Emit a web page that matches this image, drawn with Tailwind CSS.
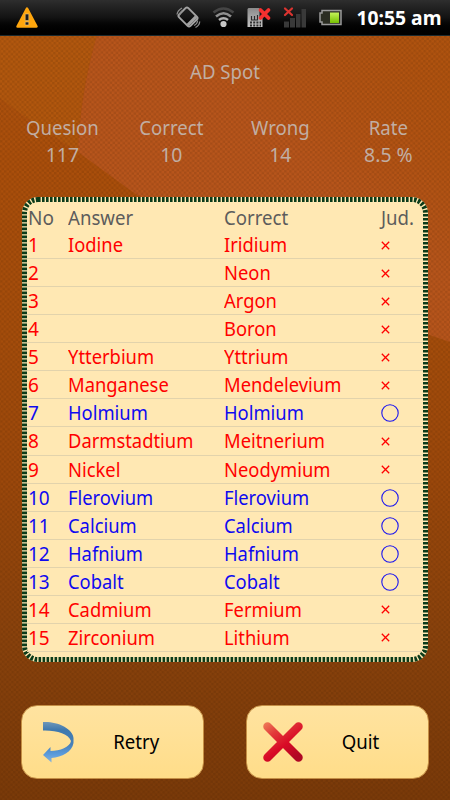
<!DOCTYPE html>
<html lang="en">
<head>
  <meta charset="UTF-8">
  <title>AD Spot</title>
  <script src="https://cdn.jsdelivr.net/npm/@tailwindcss/browser@4"></script>
</head>
<body class="w-[450px] h-[800px] overflow-hidden bg-[#874009] font-['Noto_Sans',sans-serif] text-[20px]">

  <div class="relative isolate flex flex-col w-[450px] h-[800px]">

    <!-- Background -->
    <svg class="absolute inset-0 -z-10" width="450" height="800" viewBox="0 0 450 800">
      <defs>
        <linearGradient id="bg" x1="0" y1="0" x2="0" y2="1">
          <stop offset="0" stop-color="#b05410"/>
          <stop offset=".2" stop-color="#ab4f0b"/>
          <stop offset=".42" stop-color="#a54d0b"/>
          <stop offset=".6" stop-color="#9c480b"/>
          <stop offset=".8" stop-color="#89420c"/>
          <stop offset="1" stop-color="#7a3a09"/>
        </linearGradient>
        <linearGradient id="shine" x1="0" y1="1" x2="1" y2="0">
          <stop offset="0" stop-color="#b9561d"/>
          <stop offset=".6" stop-color="#b9561d" stop-opacity=".9"/>
          <stop offset="1" stop-color="#b2540f" stop-opacity=".3"/>
        </linearGradient>
        <pattern id="weave" width="5" height="5" patternUnits="userSpaceOnUse" patternTransform="rotate(2)">
          <rect width="2.500" height="2.500" fill="#3a1c00" fill-opacity=".15"/>
          <rect x="2.500" y="2.500" width="2.500" height="2.500" fill="#3a1c00" fill-opacity=".15"/>
        </pattern>
      </defs>
      <rect width="450" height="800" fill="url(#bg)"/>
      <path d="M0 35H97Q80 90 78 152Q35 125 0 98Z" fill="#b8600f" fill-opacity=".45"/>
      <path d="M97 35H450V342Q250 275 130 190L78 152Q80 95 97 35Z" fill="url(#shine)"/>
      <rect width="450" height="800" fill="url(#weave)"/>
    </svg>

    <!-- Status bar -->
    <div class="flex items-center h-[36px] shrink-0 border-b border-[#1c2a2e] bg-linear-to-b from-[#2e2e2e] via-[#131313] to-black">
      <svg width="450" height="35" viewBox="0 0 450 35">
        <defs>
          <linearGradient id="silver" x1="0" y1="0" x2="0" y2="1">
            <stop offset="0" stop-color="#8a8a8a"/>
            <stop offset="1" stop-color="#c4c4c4"/>
          </linearGradient>
          <linearGradient id="cell" x1="0" y1="0" x2="0" y2="1">
            <stop offset="0" stop-color="#c5f25a"/>
            <stop offset="1" stop-color="#76c000"/>
          </linearGradient>
        </defs>
        <!-- warning -->
        <path d="M27 8.500L36.500 26.500H17.500Z" fill="#ffa60d" stroke="#ffa60d" stroke-width="2.500" stroke-linejoin="round"/>
        <path d="M25.200 14h3.600v6.500h-3.600zM25.200 22h3.600v3h-3.600z" fill="#1c1c1c" stroke="#e8c88a" stroke-width=".6"/>
        <!-- vibrate -->
        <g transform="rotate(-45 188 17)" fill="none" stroke="#a2a2a2">
          <rect x="181.500" y="9" width="13" height="16" rx="2" stroke-width="2"/>
          <path d="M182 22.500h12" stroke-width="3"/>
        </g>
        <path d="M177 14.500q.5-4 5-6.500M179.500 15q.5-2.500 3-4.500M194 25.500q3.500-1.500 3.500-5M195.500 27.500q4-2 4.200-6" fill="none" stroke="#8c8c8c" stroke-width="1.300"/>
        <!-- wifi -->
        <g fill="none" stroke-width="2.600">
          <path d="M213.500 12.500Q223.500 4.500 233.500 12.500" stroke="#454545"/>
          <path d="M216 16.500Q223.500 10 231 16.500" stroke="#8f8f8f"/>
          <path d="M219 20Q223.500 16.500 228 20" stroke="#b0b0b0"/>
        </g>
        <circle cx="223.500" cy="24" r="3.100" fill="#c8c8c8"/>
        <!-- sim -->
        <path d="M248.500 8h11v9h3v10h-15V9z" fill="url(#silver)"/>
        <path d="M251.500 16v4h6v-5M254.500 16v4" fill="none" stroke="#2a2a2a" stroke-width="1.200"/>
        <path d="M250 22.500h11M250 25.500h11" fill="none" stroke="#2f2f2f" stroke-width="1.800" stroke-dasharray="2 1.200"/>
        <path d="M260.500 10l8 8M268.500 10l-8 8" stroke="#f5302f" stroke-width="3.800" stroke-linecap="round"/>
        <!-- signal -->
        <path d="M284 21.500h5v6h-5zM290 18h5v9.500h-5zM296 14h4.500v13.500h-4.500zM301.500 9h4.500v18.500h-4.500z" fill="#393939"/>
        <path d="M285 8.500l7 6.500M292 8.500l-7 6.500" stroke="#dc3430" stroke-width="2.200" stroke-linecap="round"/>
        <!-- battery -->
        <path d="M322 10.500h19v14h-19v-2.500h-2v-9h2z" fill="#2b2d22" stroke="#999" stroke-width="1.500"/>
        <rect x="330" y="12.500" width="9" height="10.500" fill="url(#cell)"/>
        <text x="356.500" y="25" textLength="85" lengthAdjust="spacingAndGlyphs" class="font-bold text-[20px]" fill="#fff">10:55 am</text>
      </svg>
    </div>

    <div class="mt-[22px] text-center leading-[28px] text-[#c1aea3] scale-x-[.93]">AD Spot</div>

    <!-- Score -->
    <div class="mt-[28px] ml-[8px] w-[435px] grid grid-cols-4 text-center leading-[27px] text-[#c1aea3]">
      <div><div class="scale-x-[.93]">Quesion</div><div class="scale-x-[.97]">117</div></div>
      <div><div class="scale-x-[.93]">Correct</div><div class="scale-x-[.97]">10</div></div>
      <div><div class="scale-x-[.93]">Wrong</div><div class="scale-x-[.97]">14</div></div>
      <div><div class="scale-x-[.93]">Rate</div><div class="scale-x-[.97]">8.5 %</div></div>
    </div>

    <!-- Result table -->
    <div class="relative mt-[29px] ml-[22px] w-[406px] h-[465px] rounded-[16px] bg-[#ffe8b3] px-[5px] pt-[6px]">
      <svg class="absolute inset-0" width="406" height="465" viewBox="0 0 406 465">
        <rect x="2.500" y="2.500" width="401" height="460" rx="13.500" fill="none" stroke="#0b3b1a" stroke-width="5" stroke-dasharray="2.600 1.400"/>
      </svg>
      <div class="relative grid grid-cols-[40px_156px_157px_1fr] pl-[1px] h-[28px] leading-[29px] text-[#5c5c5c]">
        <div class="origin-left scale-x-[.95]">No</div>
        <div class="origin-left scale-x-[.93]">Answer</div>
        <div class="origin-left scale-x-[.93]">Correct</div>
        <div class="origin-left scale-x-[.93]">Jud.</div>
      </div>
      <div id="rows"></div>
    </div>

    <!-- Buttons -->
    <div class="mt-[43px] flex justify-between px-[21px]">
      <button class="flex items-center w-[183px] h-[74px] rounded-[16px] border border-[#c58f45] bg-linear-to-b from-[#ffe3a0] to-[#ffdd89]">
        <svg class="ml-[20px]" width="33" height="42" viewBox="0 0 33 42">
          <defs>
            <linearGradient id="arrow" x1="0" y1="0" x2="0" y2="1">
              <stop offset="0" stop-color="#6f97b8"/>
              <stop offset=".2" stop-color="#3f78ae"/>
              <stop offset=".55" stop-color="#477fb8"/>
              <stop offset=".8" stop-color="#5b9bdc"/>
              <stop offset="1" stop-color="#8ab4da"/>
            </linearGradient>
          </defs>
          <path d="M1 1C14 0 31 7 31.500 17V22C30 31 20 36 9.500 37V41.500L1 34L8.500 26V30C18 30 28 26 29 20C27 13 14 9 1 9.500Z" fill="url(#arrow)"/>
        </svg>
        <span class="flex-1 pl-[7px] pr-[13px] text-center text-black scale-x-[.93]">Retry</span>
      </button>
      <button class="flex items-center w-[183px] h-[74px] rounded-[16px] border border-[#c58f45] bg-linear-to-b from-[#ffe3a0] to-[#ffdd89]">
        <svg class="ml-[15px]" width="42" height="42" viewBox="0 0 42 42">
          <defs>
            <linearGradient id="cross" gradientUnits="userSpaceOnUse" x1="2" y1="2" x2="28" y2="40">
              <stop offset="0" stop-color="#ee7c58"/>
              <stop offset=".3" stop-color="#e23a3a"/>
              <stop offset=".65" stop-color="#d90a26"/>
              <stop offset="1" stop-color="#b00724"/>
            </linearGradient>
          </defs>
          <path d="M5.500 5.500L36.500 36.500M36.500 5.500L5.500 36.500" stroke="url(#cross)" stroke-width="8.500" stroke-linecap="round"/>
        </svg>
        <span class="flex-1 pl-[5px] pr-[17px] text-center text-black scale-x-[.93]">Quit</span>
      </button>
    </div>
  </div>

  <script>
const results = [
  ["Iodine", "Iridium"],
  ["", "Neon"],
  ["", "Argon"],
  ["", "Boron"],
  ["Ytterbium", "Yttrium"],
  ["Manganese", "Mendelevium"],
  ["Holmium", "Holmium"],
  ["Darmstadtium", "Meitnerium"],
  ["Nickel", "Neodymium"],
  ["Flerovium", "Flerovium"],
  ["Calcium", "Calcium"],
  ["Hafnium", "Hafnium"],
  ["Cobalt", "Cobalt"],
  ["Cadmium", "Fermium"],
  ["Zirconium", "Lithium"]
];

const marks = {
  ok: '<svg width="18" height="18" viewBox="0 0 18 18"><circle cx="9" cy="9" r="8.2" fill="none" stroke="#1a14f0" stroke-width="1.1"/></svg>',
  ng: '<svg width="9" height="9" viewBox="0 0 9 9"><path d="M.8.8L8.200 8.200M8.200.8L.8 8.200" stroke="#ff0000" stroke-width="1.300"/></svg>'
};

document.getElementById("rows").innerHTML = results.map(([answer, correct], i) => {
  const ok = answer === correct;
  return `
    <div class="relative grid grid-cols-[40px_156px_157px_1fr] pl-[1px] h-[28.070px] leading-[28px] border-b border-[#e2d3ac] ${ok ? 'text-[#0f0af0]' : 'text-[#ff0000]'}">
      <div class="origin-left scale-x-[.95]">${i + 1}</div>
      <div class="origin-left scale-x-[.918]">${answer}</div>
      <div class="origin-left scale-x-[.918]">${correct}</div>
      <div class="flex items-center">${ok ? marks.ok : marks.ng}</div>
    </div>`;
}).join("");
  </script>

</body>
</html>
